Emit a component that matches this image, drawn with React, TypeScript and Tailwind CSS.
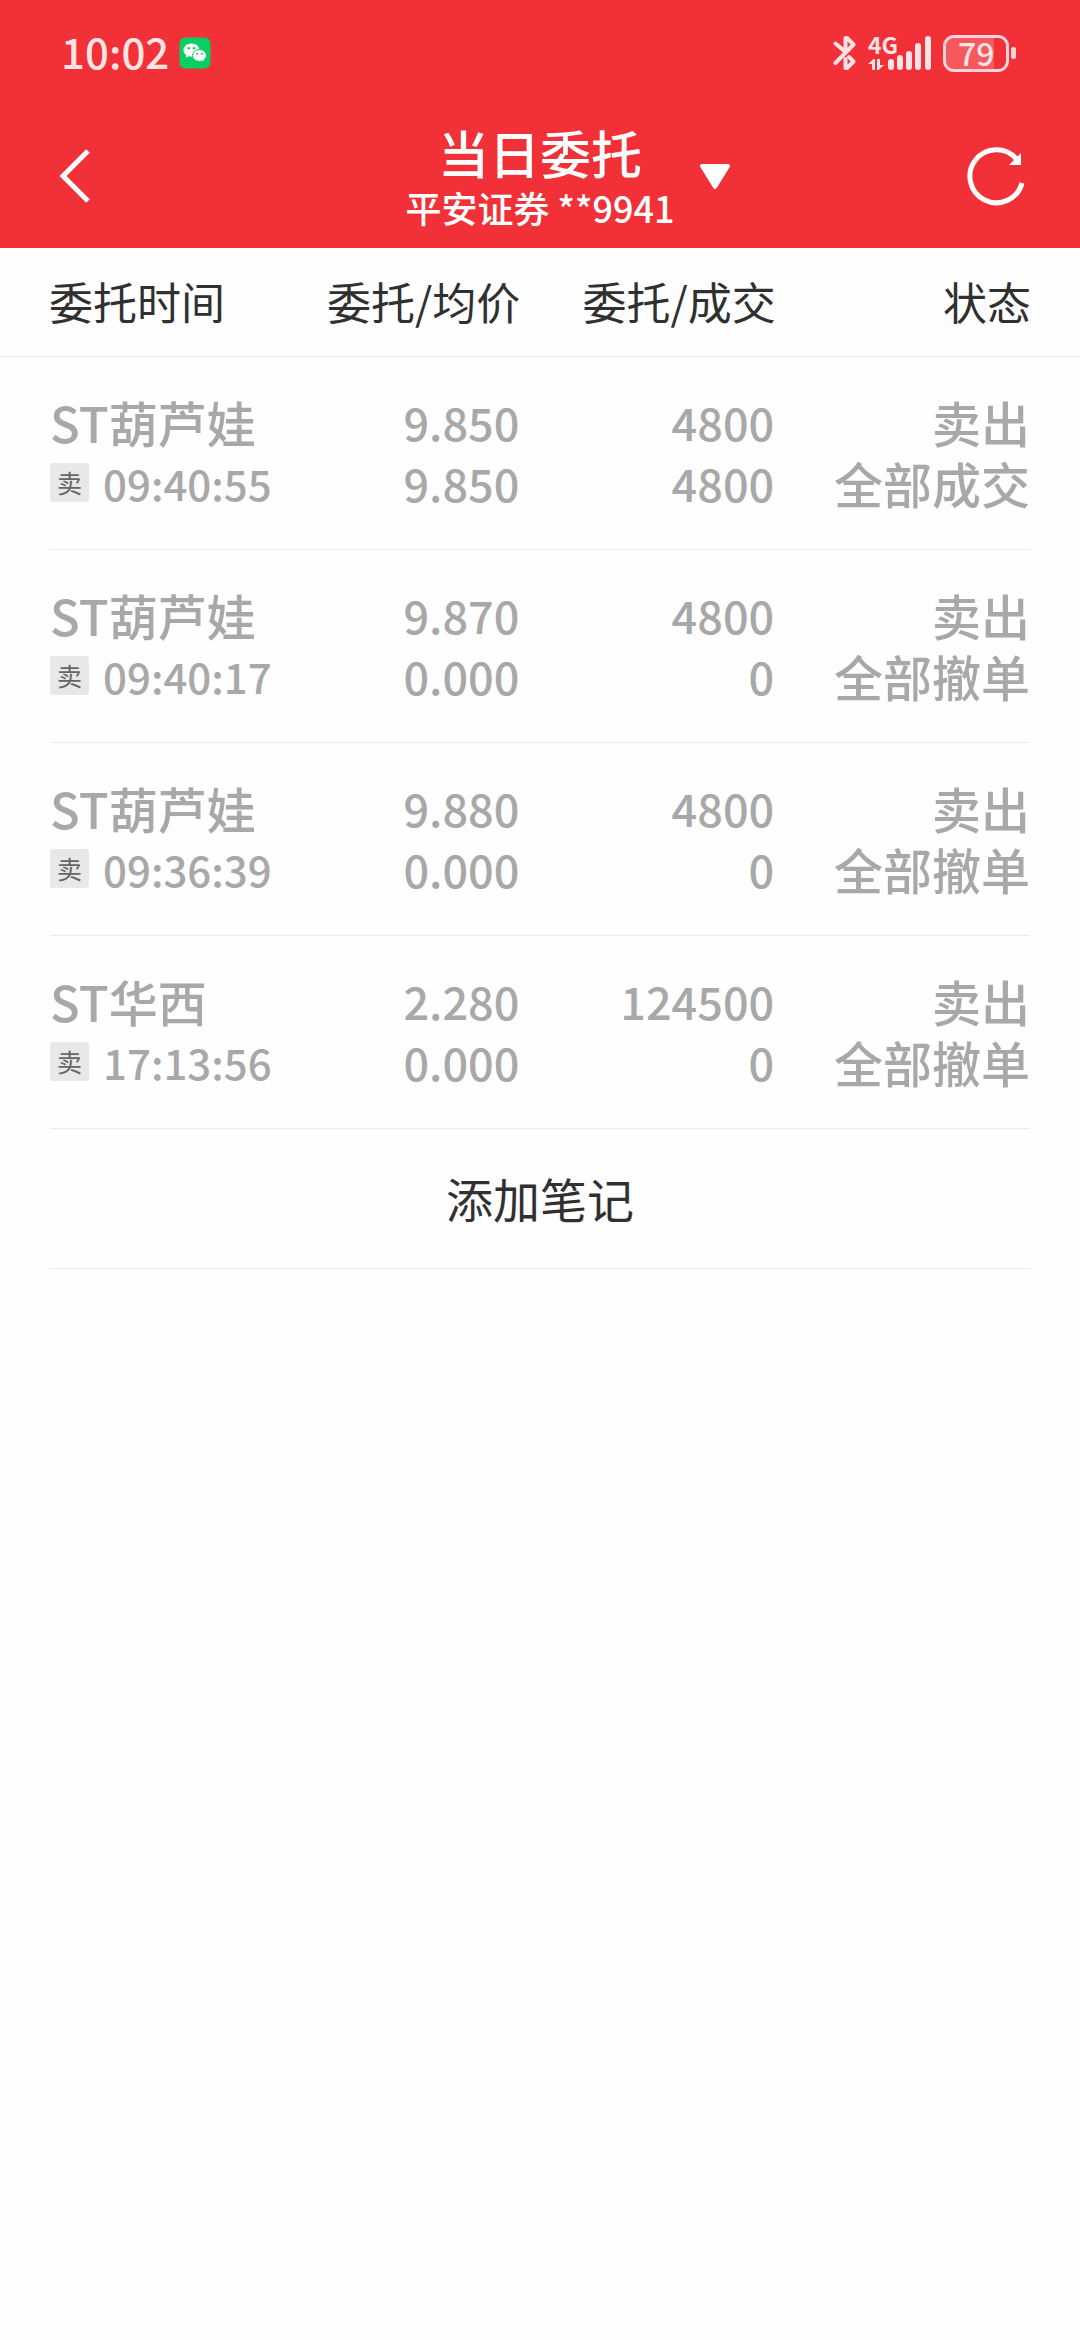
type Order = {
  name: string;
  time: string;
  price: string;
  average: string;
  amount: string;
  filled: string;
  status: string;
};

const orders: Order[] = [
  { name: 'ST葫芦娃', time: '09:40:55', price: '9.850', average: '9.850', amount: '4800', filled: '4800', status: '全部成交' },
  { name: 'ST葫芦娃', time: '09:40:17', price: '9.870', average: '0.000', amount: '4800', filled: '0', status: '全部撤单' },
  { name: 'ST葫芦娃', time: '09:36:39', price: '9.880', average: '0.000', amount: '4800', filled: '0', status: '全部撤单' },
  { name: 'ST华西', time: '17:13:56', price: '2.280', average: '0.000', amount: '124500', filled: '0', status: '全部撤单' },
];

function WeChatIcon() {
  return (
    <svg className="size-8" viewBox="0 0 32 32" aria-hidden="true">
      <rect x="0.5" y="0.5" width="31" height="31" rx="6" fill="#07cf63" />
      <path d="M12.5 6.5c-4.600 0-8 2.900-8 6.600 0 2.100 1.100 3.900 2.800 5.100l-.6 2.600 2.900-1.500c.9.300 1.900.4 2.900.4 4.600 0 8-2.900 8-6.600s-3.400-6.600-8-6.600z" fill="#fff" />
      <path d="M20.500 12.500c-3.900 0-7 2.600-7 5.900s3.100 5.900 7 5.900c.9 0 1.700-.1 2.400-.4l2.400 1.300-.5-2.200c1.600-1.100 2.600-2.700 2.600-4.600 0-3.300-3-5.900-6.900-5.900z" fill="#fff" stroke="#07cf63" strokeWidth="1" />
      <g fill="#07cf63">
        <circle cx="9.800" cy="11.200" r="1.200" />
        <circle cx="15" cy="11.200" r="1.200" />
        <circle cx="18.200" cy="16.700" r="1" />
        <circle cx="22.800" cy="16.700" r="1" />
      </g>
    </svg>
  );
}

function BluetoothIcon() {
  return (
    <svg className="h-9 w-6" viewBox="0 0 24 36" fill="none" stroke="#ffe2e3" strokeWidth="4" strokeLinecap="round" strokeLinejoin="round" aria-hidden="true">
      <path d="M2.500 28 20.500 9.500 14 3h-1.500v14L2.500 8.500" />
      <path d="M12.500 24v9H14l6.500-6.500L16 22" />
    </svg>
  );
}

function SignalIcon() {
  return (
    <div className="flex h-9 items-end gap-[2px]">
      <div className="flex h-9 w-[18px] flex-col justify-between">
        <span className="text-[23px] leading-[18px] font-bold whitespace-nowrap">4G</span>
        <svg className="h-3 w-4" viewBox="0 0 16 12" fill="#ffe2e3" aria-hidden="true">
          <path d="M7 0v11H4V5H0L5.500 0H7zM9 11V0h3v6h4l-5.500 5H9z" />
        </svg>
      </div>
      <svg className="h-9 w-11" viewBox="0 0 44 36" fill="#ffe2e3" aria-hidden="true">
        <rect x="0" y="24" width="6" height="11" rx="3" />
        <rect x="9" y="20" width="6" height="15" rx="3" />
        <rect x="18" y="16" width="6" height="19" rx="3" />
        <rect x="27" y="8" width="6" height="27" rx="3" />
        <rect x="37" y="1" width="6" height="34" rx="3" />
      </svg>
    </div>
  );
}

function Battery() {
  return (
    <div className="flex items-center gap-[2px]">
      <div className="flex h-[37px] w-[66px] items-center rounded-[11px] border-3 border-[#ffd3d5] bg-[linear-gradient(90deg,#f5595e_80%,#f23037_80%)] pb-[2px] pl-3">
        <span className="text-[32px] leading-[29px] font-medium">79</span>
      </div>
      <div className="h-3 w-[5px] rounded-[2px] bg-[#ffd3d5]" />
    </div>
  );
}

function StatusBar() {
  return (
    <div className="flex h-[106px] items-center justify-between pr-16 pl-[61px] text-[#ffe2e3]">
      <div className="flex items-center gap-[10px]">
        <span className="pb-1 text-[42px] leading-[44px] font-medium">10:02</span>
        <WeChatIcon />
      </div>
      <div className="flex items-center gap-[11px]">
        <BluetoothIcon />
        <SignalIcon />
        <Battery />
      </div>
    </div>
  );
}

function NavBar() {
  return (
    <div className="grid h-[142px] grid-cols-[1fr_auto_1fr] items-center px-[50px]">
      <button type="button" aria-label="返回" className="flex h-20 w-20 items-center pl-2">
        <svg className="h-14 w-9" viewBox="0 0 36 56" fill="none" stroke="#fff" strokeWidth="5" aria-hidden="true">
          <path d="M30 2 5 27 30 52" />
        </svg>
      </button>
      <button type="button" className="relative flex flex-col items-center pb-[2px] font-medium">
        <span className="text-[51px] leading-[62px]">当日委托</span>
        <span className="text-[36px] leading-[48px] whitespace-nowrap">平安证券 **9941</span>
        <svg className="absolute top-[42px] left-full ml-6 h-7 w-8" viewBox="0 0 32 28" fill="#fff" stroke="#fff" strokeWidth="4" strokeLinejoin="round" aria-hidden="true">
          <path d="M3 3h26L16 24z" />
        </svg>
      </button>
      <button type="button" aria-label="刷新" className="flex h-20 w-20 items-center justify-end justify-self-end">
        <svg className="size-16" viewBox="0 0 64 64" aria-hidden="true">
          <path d="M56 38A26.500 26.500 0 1 1 50.500 14" fill="none" stroke="#fff" strokeWidth="5" />
          <path d="M55 8v12H43z" fill="#fff" />
        </svg>
      </button>
    </div>
  );
}

function OrderRow({ order }: { order: Order }) {
  return (
    <tr className="mx-[50px] grid grid-cols-[23fr_25fr_26fr_26fr] border-b border-[#ebebeb] pt-[34px] pb-9">
      <td className="whitespace-nowrap">
        <div className="text-[49px] leading-[61px]">{order.name}</div>
        <div className="flex h-[61px] items-center gap-[14px]">
          <span className="flex size-[39px] items-center justify-center rounded-[3px] bg-[#e8e8e8] text-[25px] leading-[25px] font-normal text-[#666]">卖</span>
          <span className="text-[42px] leading-[61px]">{order.time}</span>
        </div>
      </td>
      <td className="pr-px text-right text-[45px] leading-[61px]">
        <div>{order.price}</div>
        <div>{order.average}</div>
      </td>
      <td className="pr-px text-right text-[45px] leading-[61px]">
        <div>{order.amount}</div>
        <div>{order.filled}</div>
      </td>
      <td className="text-right text-[49px] leading-[61px] whitespace-nowrap">
        <div>卖出</div>
        <div>{order.status}</div>
      </td>
    </tr>
  );
}

export default function App() {
  return (
    <div className="min-h-screen bg-[#fefefe] font-['Noto_Sans_CJK_SC',sans-serif] text-[#303030]">
      <header className="bg-[#f23037] text-white">
        <StatusBar />
        <NavBar />
      </header>
      <main>
        <table className="block">
          <thead className="block border-b border-[#ebebeb] pb-[2px]">
            <tr className="mx-[49px] grid grid-cols-[23fr_25fr_26fr_26fr] text-[44px] leading-[106px] whitespace-nowrap">
              <th scope="col" className="text-left font-normal">委托时间</th>
              <th scope="col" className="text-right font-normal">委托/均价</th>
              <th scope="col" className="text-right font-normal">委托/成交</th>
              <th scope="col" className="text-right font-normal">状态</th>
            </tr>
          </thead>
          <tbody className="block font-medium text-[#a8a8a8]">
            {orders.map((order) => (
              <OrderRow key={order.time} order={order} />
            ))}
          </tbody>
        </table>
        <div className="mx-[50px] border-b border-[#ebebeb]">
          <button type="button" className="block w-full pb-[2px] text-center text-[47px] leading-[137px]">添加笔记</button>
        </div>
      </main>
    </div>
  );
}
